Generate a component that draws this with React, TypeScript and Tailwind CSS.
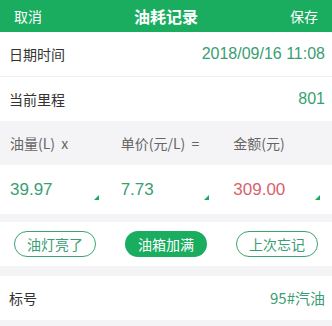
import React from "react";

const font = { fontFamily: '"Noto Sans CJK SC", "Liberation Sans", sans-serif' };

function Tri() {
  return (
    <svg width="5" height="5" viewBox="0 0 5 5" className="absolute right-[12px] bottom-[14px]">
      <polygon points="5,0 5,5 0,5" fill="#1aad5f" />
    </svg>
  );
}

export default function App() {
  return (
    <div className="w-[332px] h-[326px] bg-[#f4f4f6] overflow-hidden" style={font}>
      <div className="h-[32px] bg-[#1aad5f] flex items-center justify-between px-[14px] text-white">
        <span className="text-[14px]">取消</span>
        <span className="text-[16px] font-bold">油耗记录</span>
        <span className="text-[14px]">保存</span>
      </div>
      <div className="bg-white">
        <div className="h-[45px] flex items-center justify-between pl-[9px] pr-[7px] border-b border-[#f0f0f2]">
          <span className="text-[14px] text-[#333]">日期时间</span>
          <span className="text-[16px] text-[#3a9e72]" style={{ fontFamily: '"Liberation Sans", sans-serif' }}>2018/09/16 11:08</span>
        </div>
        <div className="h-[44px] flex items-center justify-between pl-[9px] pr-[7px]">
          <span className="text-[14px] text-[#333]">当前里程</span>
          <span className="text-[16px] text-[#3a9e72]" style={{ fontFamily: '"Liberation Sans", sans-serif' }}>801</span>
        </div>
      </div>
      <div className="h-[44px] grid grid-cols-3 items-center text-[14px] text-[#666]">
        <span className="pl-[10px]">油量(L)&nbsp;&nbsp;x</span>
        <span className="pl-[10px]">单价(元/L)&nbsp;&nbsp;=</span>
        <span className="pl-[12px]">金额(元)</span>
      </div>
      <div className="h-[49px] bg-white grid grid-cols-3 text-[17px]" style={{ fontFamily: '"Liberation Sans", sans-serif' }}>
        <div className="relative flex items-center pl-[10px] text-[#3a9e72]">39.97<Tri /></div>
        <div className="relative flex items-center pl-[10px] text-[#3a9e72]">7.73<Tri /></div>
        <div className="relative flex items-center pl-[12px] text-[#d8636b]">309.00<Tri /></div>
      </div>
      <div className="h-[8px]" />
      <div className="h-[44px] bg-white flex items-center justify-between px-[14px] text-[14px]">
        <span className="w-[82px] h-[26px] rounded-full border border-[#3aa56e] text-[#3a9e72] flex items-center justify-center">油灯亮了</span>
        <span className="w-[82px] h-[26px] rounded-full bg-[#1aad5f] text-white flex items-center justify-center">油箱加满</span>
        <span className="w-[82px] h-[26px] rounded-full border border-[#3aa56e] text-[#3a9e72] flex items-center justify-center">上次忘记</span>
      </div>
      <div className="h-[10px]" />
      <div className="h-[44px] bg-white flex items-center justify-between pl-[9px] pr-[7px]">
        <span className="text-[14px] text-[#333]">标号</span>
        <span className="text-[15px] text-[#3a9e72]">95#汽油</span>
      </div>
    </div>
  );
}
